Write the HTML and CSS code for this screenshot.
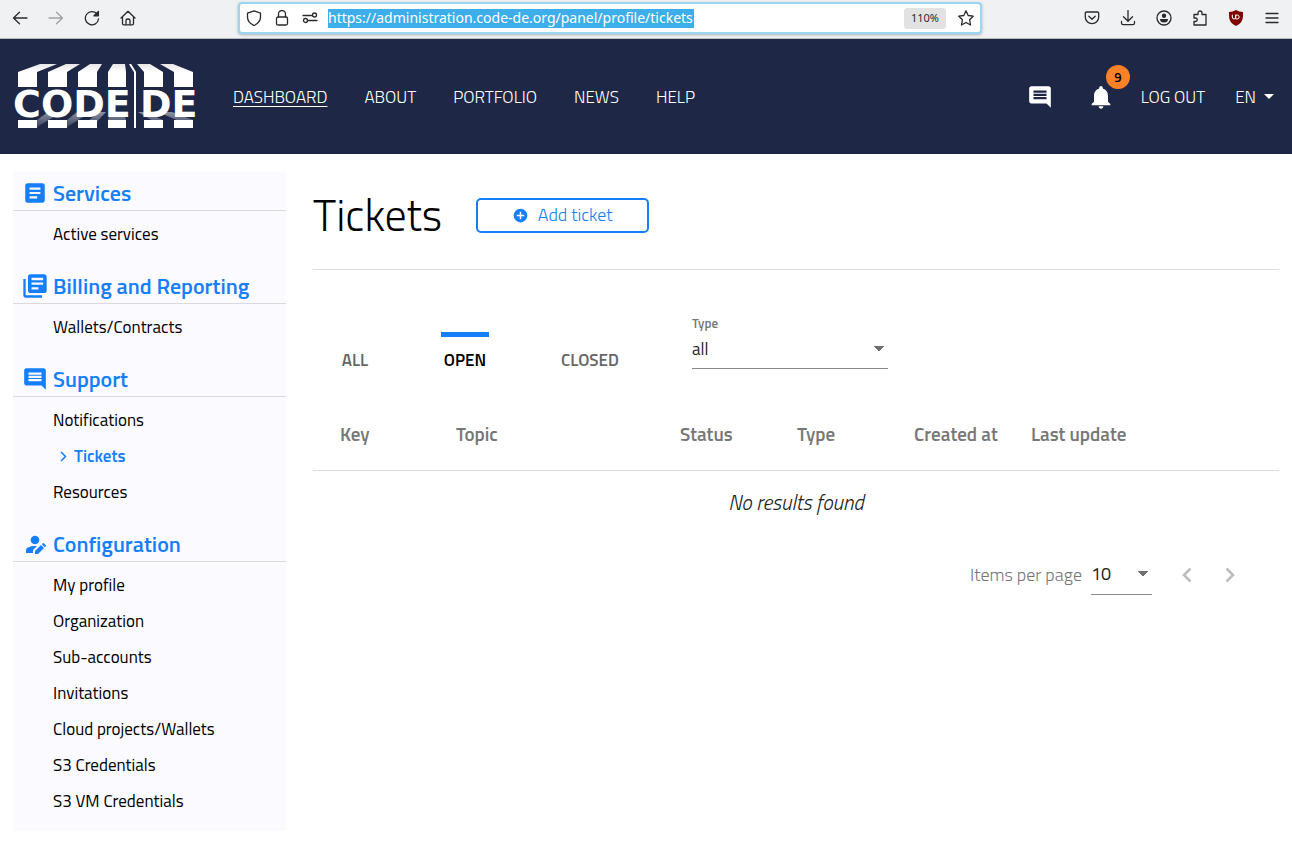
FILE: index.html
```html
<!DOCTYPE html>
<html lang="en">
<head>
<meta charset="utf-8">
<title>Tickets</title>
<link rel="stylesheet" href="styles.css">
</head>
<body>
<div class="browser">
  <div class="tools">
    <button class="tool" aria-label="Back"><svg viewBox="0 0 16 16"><path d="M15 8H1.5M7.5 2.2 1.5 8l6 5.8"/></svg></button>
    <button class="tool disabled" aria-label="Forward"><svg viewBox="0 0 16 16"><path d="M1 8h13.500M8.500 2.200 14.500 8l-6 5.800"/></svg></button>
    <button class="tool" aria-label="Reload"><svg viewBox="0 0 16 16"><path d="M14.500 9A6.600 6.600 0 1 1 12.800 3.700M14.400 1.500v4.300H10z"/><path class="solid" d="M14.500 1.500v4.300H10z"/></svg></button>
    <button class="tool" aria-label="Home"><svg viewBox="0 0 16 16"><path d="M1 8 8 1.300 15 8M2.500 7v6.500q0 1.300 1.300 1.300h8.400q1.300 0 1.300-1.300V7M6 14.800v-4q0-1.800 2-1.800t2 1.800v4"/></svg></button>
  </div>
  <div class="address">
    <button class="mini" aria-label="Tracking protection"><svg viewBox="0 0 16 16"><path d="M8 .8 14.500 3.200V7q0 5.500-6.500 8.500Q1.500 12.500 1.500 7V3.200z"/></svg></button>
    <button class="mini" aria-label="Site security"><svg viewBox="0 0 16 16"><rect x="2.500" y="7" width="11" height="8" rx="1.500"/><path d="M4.500 7V4a3.500 3.500 0 0 1 7 0v3"/></svg></button>
    <button class="mini" aria-label="Permissions"><svg viewBox="0 0 16 16"><path d="M1 5.500h8.500M6.500 10.500H15"/><circle cx="12.500" cy="5" r="2"/><circle cx="3.500" cy="10.500" r="2"/></svg></button>
    <input class="url" type="text" aria-label="Address" value="https://administration.code-de.org/panel/profile/tickets">
    <button class="zoom">110%</button>
    <button class="mini" aria-label="Bookmark"><svg viewBox="0 0 16 16"><path d="m8 .8 2.200 4.700 5 .7-3.600 3.600.9 5.200L8 12.500 3.500 15l.9-5.200L.8 6.200l5-.7z"/></svg></button>
  </div>
  <div class="tools">
    <button class="tool" aria-label="Pocket"><svg viewBox="0 0 16 16"><path d="M2.500 2h11q1.200 0 1.200 1.200V7A6.700 6.700 0 0 1 1.300 7V3.200Q1.300 2 2.500 2zM4.800 6.200 8 9.300l3.200-3.100"/></svg></button>
    <button class="tool" aria-label="Downloads"><svg viewBox="0 0 16 16"><path d="M8 .5V11M3.500 6.800 8 11.200l4.500-4.400M1.500 11.500V13q0 1.600 1.600 1.600h9.800q1.600 0 1.600-1.600v-1.500"/></svg></button>
    <button class="tool" aria-label="Account"><svg viewBox="0 0 16 16"><circle cx="8" cy="8" r="7"/><circle class="solid" cx="8" cy="5.700" r="2.200"/><path class="solid" d="M4 9h8q0 3.500-4 3.500T4 9z"/></svg></button>
    <button class="tool" aria-label="Extensions"><svg viewBox="0 0 16 16"><path d="M2 4.500h4V3a2 2 0 0 1 4 0v1.500h4V15H2v-3.500h1.500a1.700 1.700 0 0 0 0-3.500H2z"/></svg></button>
    <button class="tool" aria-label="uBlock Origin"><svg viewBox="0 0 16 16"><path class="shield" d="M8 0q3 2 7 2v4q0 7-7 10Q1 13 1 6V2q4 0 7-2z"/><path class="badge-mark" d="M4.300 5v2q0 2 1.700 2t1.700-2V5v4h1.500q2 0 2-2t-2-2H7.700"/></svg></button>
    <button class="tool" aria-label="Menu"><svg viewBox="0 0 16 16"><path d="M2 3.500h12M2 8h12M2 12.500h12"/></svg></button>
  </div>
</div>

<header class="header">
  <a class="logo" href="#" aria-label="CODE-DE">
    <svg viewBox="0 0 186 65" width="186" height="65">
      <defs>
        <linearGradient id="shade" x1="0" y1="0" x2="0" y2="1"><stop offset="0" stop-color="#8b90a1"/><stop offset="1" stop-color="#3a4360"/></linearGradient>
        <linearGradient id="roof" x1="0" y1="0" x2="0" y2="1"><stop offset="0" stop-color="#e6e6e6"/><stop offset=".35" stop-color="#fff"/></linearGradient>
      </defs>
      <g fill="url(#roof)">
        <path d="M5 8 27 0h17L24 8v15H5zM35 8 53 0h14L54 8v15H35zM65 8 77 0h12l-5 8v15H65zM95 8l5-8h12l1 8v15H95zM124 0h13l13 8v15h-19V8zM147 0h13l20 8v15h-19V8z"/>
      </g>
      <g fill="url(#shade)">
        <path d="M35 48h14L24 63v-7zM64 48h14L54 63v-7zM93 48h-6L76 56l3 7zM97 50h14l2 6H95zM125 48h6l19 8v7zM145 48h14l21 8v7z"/>
      </g>
      <path fill="#fff" d="M5 56h19v8H5zM35 56h19v8H35zM65 56h19v8H65zM95 56h18v8H95zM131 56h19v8h-19zM161 56h19v8h-19z"/>
      <path fill="none" stroke="#fff" stroke-width="2" d="m117 0 5 8v56"/>
      <g class="logo-text"><text x="0" y="53">CODE</text><text x="127" y="53">DE</text></g>
    </svg>
  </a>
  <nav class="nav">
    <a class="current" href="#">DASHBOARD</a><a href="#">ABOUT</a><a href="#">PORTFOLIO</a><a href="#">NEWS</a><a href="#">HELP</a>
  </nav>
  <div class="account">
    <a class="icon-link" href="#" aria-label="Messages"><svg viewBox="0 0 24 24" width="26" height="26"><path fill="currentColor" d="M21.990 4c0-1.100-.89-2-1.990-2H4c-1.100 0-2 .9-2 2v12c0 1.100.9 2 2 2h14l4 4-.01-18zM18 14H6v-2h12v2zm0-3H6V9h12v2zm0-3H6V6h12v2z"/></svg></a>
    <a class="icon-link bell" href="#" aria-label="Notifications, 9 new"><svg viewBox="0 0 24 24" width="28" height="28"><path fill="currentColor" d="M12 22c1.100 0 2-.9 2-2h-4c0 1.100.89 2 2 2zm6-6v-5c0-3.070-1.640-5.640-4.500-6.320V4c0-.83-.67-1.500-1.500-1.500s-1.500.67-1.500 1.500v.68C7.630 5.360 6 7.920 6 11v5l-2 2v1h16v-1l-2-2z"/></svg><span class="badge">9</span></a>
    <a class="logout" href="#">LOG OUT</a>
    <button class="lang">EN<svg viewBox="0 0 10 5" width="10" height="5"><path fill="currentColor" d="M0 0h10L5 5z"/></svg></button>
  </div>
</header>

<div class="page">
  <aside class="sidebar">
    <section>
      <h2><svg viewBox="0 0 24 24" width="26" height="26"><path fill="currentColor" d="M19 3H5c-1.100 0-2 .9-2 2v14c0 1.100.9 2 2 2h14c1.100 0 2-.9 2-2V5c0-1.100-.9-2-2-2zm-5 14H7v-2h7v2zm3-4H7v-2h10v2zm0-4H7V7h10v2z"/></svg>Services</h2>
      <ul><li><a href="#">Active services</a></li></ul>
    </section>
    <section>
      <h2><svg viewBox="0 0 24 24" width="28" height="28"><path fill="currentColor" d="M4 6H2v14c0 1.100.9 2 2 2h14v-2H4V6zm16-4H8c-1.100 0-2 .9-2 2v12c0 1.100.9 2 2 2h12c1.100 0 2-.9 2-2V4c0-1.100-.9-2-2-2zm-1 9H9V9h10v2zm-4 4H9v-2h6v2zm4-8H9V5h10v2z"/></svg>Billing and Reporting</h2>
      <ul><li><a href="#">Wallets/Contracts</a></li></ul>
    </section>
    <section>
      <h2><svg viewBox="0 0 24 24" width="26" height="26"><path fill="currentColor" d="M21.990 4c0-1.100-.89-2-1.990-2H4c-1.100 0-2 .9-2 2v12c0 1.100.9 2 2 2h14l4 4-.01-18zM18 14H6v-2h12v2zm0-3H6V9h12v2zm0-3H6V6h12v2z"/></svg>Support</h2>
      <ul>
        <li><a href="#">Notifications</a></li>
        <li><a class="active" href="#"><svg viewBox="0 0 7 11" width="7" height="11"><path fill="none" stroke="currentColor" stroke-width="1.500" d="m1 1 4.500 4.500L1 10"/></svg>Tickets</a></li>
        <li><a href="#">Resources</a></li>
      </ul>
    </section>
    <section>
      <h2><svg viewBox="0 0 24 24" width="24" height="24"><circle fill="currentColor" cx="12" cy="8" r="4.300"/><path fill="currentColor" d="M3 21v-2.500C3 15.500 7 14 12 14h2l-4 4v3zM12 22v-3l6-6 3 3-6 6zM18.800 12.200l1-1q.5-.5 1 0l2 2q.5.500 0 1l-1 1z"/></svg>Configuration</h2>
      <ul>
        <li><a href="#">My profile</a></li>
        <li><a href="#">Organization</a></li>
        <li><a href="#">Sub-accounts</a></li>
        <li><a href="#">Invitations</a></li>
        <li><a href="#">Cloud projects/Wallets</a></li>
        <li><a href="#">S3 Credentials</a></li>
        <li><a href="#">S3 VM Credentials</a></li>
      </ul>
    </section>
  </aside>

  <main class="main">
    <div class="title-row">
      <h1>Tickets</h1>
      <button class="add"><svg viewBox="0 0 24 24" width="15" height="15"><path fill="currentColor" d="M12 1a11 11 0 1 0 0 22 11 11 0 0 0 0-22zm6 12.200h-4.800V18h-2.400v-4.800H6v-2.400h4.800V6h2.400v4.800H18z"/></svg>Add ticket</button>
    </div>
    <div class="filters">
      <div class="tabs">
        <button class="tab">ALL</button>
        <button class="tab selected">OPEN</button>
        <button class="tab">CLOSED</button>
      </div>
      <div class="field">
        <label for="type">Type</label>
        <select id="type"><option>all</option></select>
      </div>
    </div>
    <table class="tickets">
      <colgroup><col class="c-key"><col class="c-topic"><col class="c-mid"><col class="c-mid"><col class="c-mid"><col></colgroup>
      <thead><tr><th>Key</th><th>Topic</th><th>Status</th><th>Type</th><th>Created at</th><th>Last update</th></tr></thead>
      <tbody><tr><td colspan="6">No results found</td></tr></tbody>
    </table>
    <div class="paginator">
      <label for="count">Items per page</label>
      <select id="count"><option>10</option></select>
      <button aria-label="Previous page" disabled><svg viewBox="0 0 10 16" width="10" height="16"><path d="M8.500 1.500 2 8l6.500 6.500"/></svg></button>
      <button aria-label="Next page" disabled><svg viewBox="0 0 10 16" width="10" height="16"><path d="M1.500 1.500 8 8l-6.500 6.500"/></svg></button>
    </div>
  </main>
</div>
</body>
</html>
```
FILE: styles.css
```css
* { box-sizing: border-box; }
body {
  margin: 0;
  background: #fff;
  color: #000;
  font: 17px/24px "Titillium Web", Roboto, sans-serif;
}
button, input, select { font: inherit; color: inherit; border: 0; background: none; padding: 0; margin: 0; }
button { cursor: pointer; display: flex; align-items: center; justify-content: center; }
a { color: inherit; text-decoration: none; }
svg { flex: none; display: block; }

.browser {
  display: flex;
  justify-content: space-between;
  align-items: flex-start;
  gap: 92px;
  height: 39px;
  padding: 0 2px;
  background: #f0f1f2;
  border-bottom: 1px solid #b9babb;
  color: #2a2a2e;
  font-family: "Noto Sans", sans-serif;
}
.tools { display: flex; }
.tool { width: 36px; height: 36px; }
.tool svg, .mini svg { width: 16px; height: 16px; fill: none; stroke: currentColor; stroke-width: 1.3; stroke-linecap: round; stroke-linejoin: round; }
.tool.disabled { color: #a0a1a3; }
.tool .solid { fill: currentColor; stroke-width: 0; }
.tool .shield { fill: #800000; stroke: none; }
.tool .badge-mark { stroke: #fff; stroke-width: 1; }
.address {
  flex: 1;
  display: flex;
  align-items: center;
  height: 32px;
  margin-top: 2px;
  background: #fff;
  border: 2px solid #9ad5f3;
  border-radius: 4px;
  box-shadow: 0 1px 3px #0004;
}
.mini { width: 28px; height: 28px; }
.url {
  width: 366px;
  height: 19px;
  margin: 0 auto 0 4px;
  background: #3daee9;
  color: #fff;
  font-size: 14px;
  outline: 0;
}
.zoom { width: 42px; height: 21px; margin-right: 6px; background: #e2e2e3; border-radius: 3px; font-size: 11px; }

.header {
  display: flex;
  align-items: center;
  min-height: 115px;
  padding: 0 18px 0 13px;
  background: #1e2846;
  color: #fff;
  font-weight: 300;
}
.logo-text { font: bold 38px "DejaVu Sans", sans-serif; fill: #fff; }
.nav { display: flex; gap: 37px; margin-left: 34px; }
.nav .current { text-decoration: underline; text-underline-offset: 3px; }
.account { display: flex; align-items: center; margin-left: auto; }
.bell { position: relative; margin: 0 26px 0 34px; }
.badge {
  position: absolute;
  left: 19px;
  top: -18px;
  width: 24px;
  height: 24px;
  border-radius: 50%;
  background: #ff8127;
  color: #000;
  font-size: 13px;
  font-weight: 600;
  text-align: center;
}
.lang { gap: 8px; margin-left: 30px; font-weight: 300; }

.page { display: flex; align-items: flex-start; gap: 27px; padding: 17px 13px 32px; }
.sidebar { flex: 0 0 273px; background: #fafaff; padding-bottom: 12px; }
.sidebar section + section { margin-top: 12px; }
.sidebar h2 {
  display: grid;
  grid-template-columns: 36px 1fr;
  align-items: center;
  height: 40px;
  margin: 0;
  padding: 4px 0 0 4px;
  border-bottom: 1px solid #d9d9df;
  color: #157efb;
  font-size: 22px;
  font-weight: 600;
}
.sidebar h2 svg { justify-self: center; }
.sidebar ul { list-style: none; margin: 0; padding: 5px 0 0 40px; }
.sidebar a { display: flex; align-items: center; height: 36px; }
.sidebar .active { gap: 7px; padding-left: 7px; color: #157efb; font-weight: 600; }

.main { flex: 1; min-width: 0; }
.title-row { display: flex; align-items: center; gap: 34px; padding: 17px 0 27px; border-bottom: 1px solid #dedede; }
h1 { margin: 0; font-size: 44px; line-height: 54px; font-weight: 300; }
.add { width: 173px; height: 35px; gap: 10px; border: 2px solid #157efb; border-radius: 5px; color: #157efb; font-size: 18px; font-weight: 300; }
.filters { display: flex; align-items: flex-start; padding: 42px 0 0 18px; }
.tabs { display: grid; grid-template-columns: 48px 48px 78px; gap: 62px; padding-top: 20px; }
.tab { height: 46px; padding-top: 4px; border-top: 5px solid transparent; color: #666; font-weight: 600; }
.tab.selected { border-top-color: #157efb; color: #000; }
.field { display: flex; flex-direction: column; margin-left: 63px; }
.field label { color: #777; font-size: 13px; line-height: 22px; font-weight: 600; }
select {
  --arrow-top: 12px;
  appearance: none;
  border-bottom: 1px solid #8a8a8a;
  border-radius: 0;
  color: #222;
  background:
    linear-gradient(to bottom left, #707070 50%, transparent 51%) right 9px top var(--arrow-top) / 5px 5px no-repeat,
    linear-gradient(to bottom right, #707070 50%, transparent 51%) right 4px top var(--arrow-top) / 5px 5px no-repeat;
}
#type { width: 196px; height: 35px; padding-bottom: 5px; }

.tickets { width: 100%; margin-top: 21px; table-layout: fixed; border-collapse: collapse; }
.c-key { width: 143px; }
.c-topic { width: 224px; }
.c-mid { width: 117px; }
.tickets th { height: 71px; padding: 0; border-bottom: 1px solid #dedede; color: #777; font-size: 19px; font-weight: 600; text-align: left; }
.tickets th:first-child { padding-left: 27px; }
.tickets td { height: 64px; padding: 0; color: #222; font-size: 21px; font-style: italic; font-weight: 300; text-align: center; }

.paginator { display: flex; align-items: center; justify-content: flex-end; margin-top: 20px; padding-right: 44px; color: #777; }
.paginator label { margin-right: 9px; font-size: 18px; font-weight: 300; }
#count { --arrow-top: 17px; width: 61px; height: 41px; margin-right: 30px; font-size: 18px; }
.paginator button + button { margin-left: 33px; }
.paginator button path { fill: none; stroke: #bdbdbd; stroke-width: 2.5; }
```
